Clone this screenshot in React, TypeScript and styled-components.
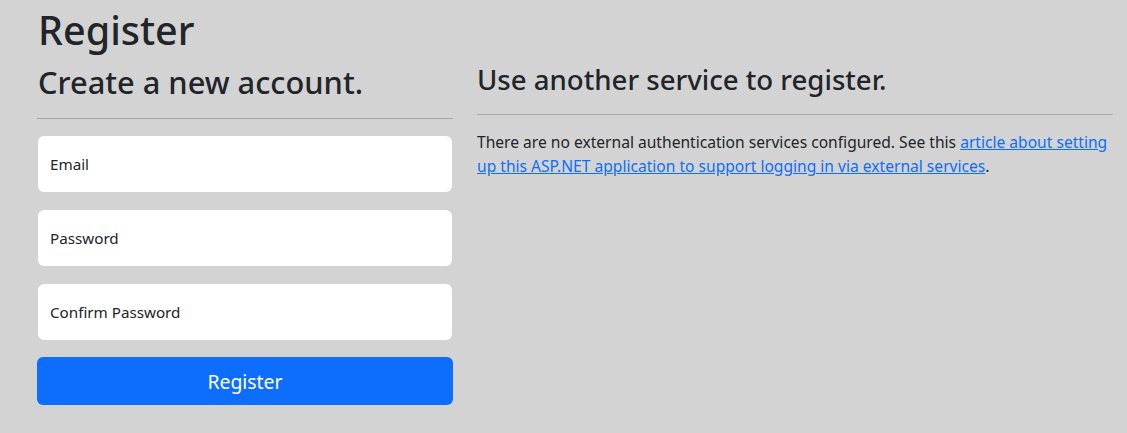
import React from 'react';
import styled, { createGlobalStyle } from 'styled-components';

const GlobalStyle = createGlobalStyle`
  html, body {
    margin: 0;
    padding: 0;
    background: #d3d3d3;
  }

  body {
    font-family: 'Noto Sans', 'Open Sans', sans-serif;
    color: #212529;
  }
`;

const Page = styled.main`
  padding: 6px 14px 0 37px;
`;

const Title = styled.h1`
  margin: 0 0 9px 1px;
  font-size: 39.5px;
  font-weight: 500;
  line-height: 48px;
`;

const Row = styled.div`
  display: grid;
  grid-template-columns: 416px 1fr;
  column-gap: 24px;
`;

const Column = styled.section<{ $shift?: number }>`
  display: flex;
  flex-direction: column;
  margin-top: ${({ $shift }) => $shift ?? 0}px;
`;

const Heading = styled.h2<{ $size: number; $lead: number; $indent?: number }>`
  margin: 0 0 0 ${({ $indent }) => $indent ?? 0}px;
  font-size: ${({ $size }) => $size}px;
  font-weight: 500;
  line-height: ${({ $lead }) => $lead}px;
`;

const Rule = styled.hr<{ $top: number; $bottom: number }>`
  margin: ${({ $top, $bottom }) => `${$top}px 0 ${$bottom}px`};
  border: 0;
  border-top: 1px solid #a7a8a9;
`;

const Form = styled.form`
  display: flex;
  flex-direction: column;
  gap: 18px;
`;

const Field = styled.label`
  display: flex;
  align-items: center;
  height: 56px;
  margin: 0 1px;
  padding: 0 12px;
  background: #fff;
  border-radius: 6px;
  font-size: 15.2px;
`;

const Submit = styled.button`
  height: 48px;
  margin-top: -1px;
  border: 0;
  border-radius: 6px;
  background: #0d6efd;
  color: #fff;
  font-family: inherit;
  font-size: 19.4px;
  cursor: pointer;
`;

const Text = styled.p`
  margin: 0;
  font-size: 15.6px;
  line-height: 24px;
`;

const Anchor = styled.a`
  color: #0d6efd;
`;

const App: React.FC = () => (
  <>
    <GlobalStyle />
    <Page>
      <Title>Register</Title>
      <Row>
        <Column>
          <Heading $size={30.8} $lead={38} $indent={1}>
            Create a new account.
          </Heading>
          <Rule $top={17} $bottom={17} />
          <Form onSubmit={(ev) => ev.preventDefault()}>
            <Field>Email</Field>
            <Field>Password</Field>
            <Field>Confirm Password</Field>
            <Submit type="submit">Register</Submit>
          </Form>
        </Column>
        <Column $shift={-1}>
          <Heading as="h3" $size={27.6} $lead={34}>
            Use another service to register.
          </Heading>
          <Rule $top={18} $bottom={15} />
          <Text>
            There are no external authentication services configured. See this{' '}
            <Anchor href="#">
              article about setting up this ASP.NET application to support logging in via
              external services
            </Anchor>
            .
          </Text>
        </Column>
      </Row>
    </Page>
  </>
);

export default App;
